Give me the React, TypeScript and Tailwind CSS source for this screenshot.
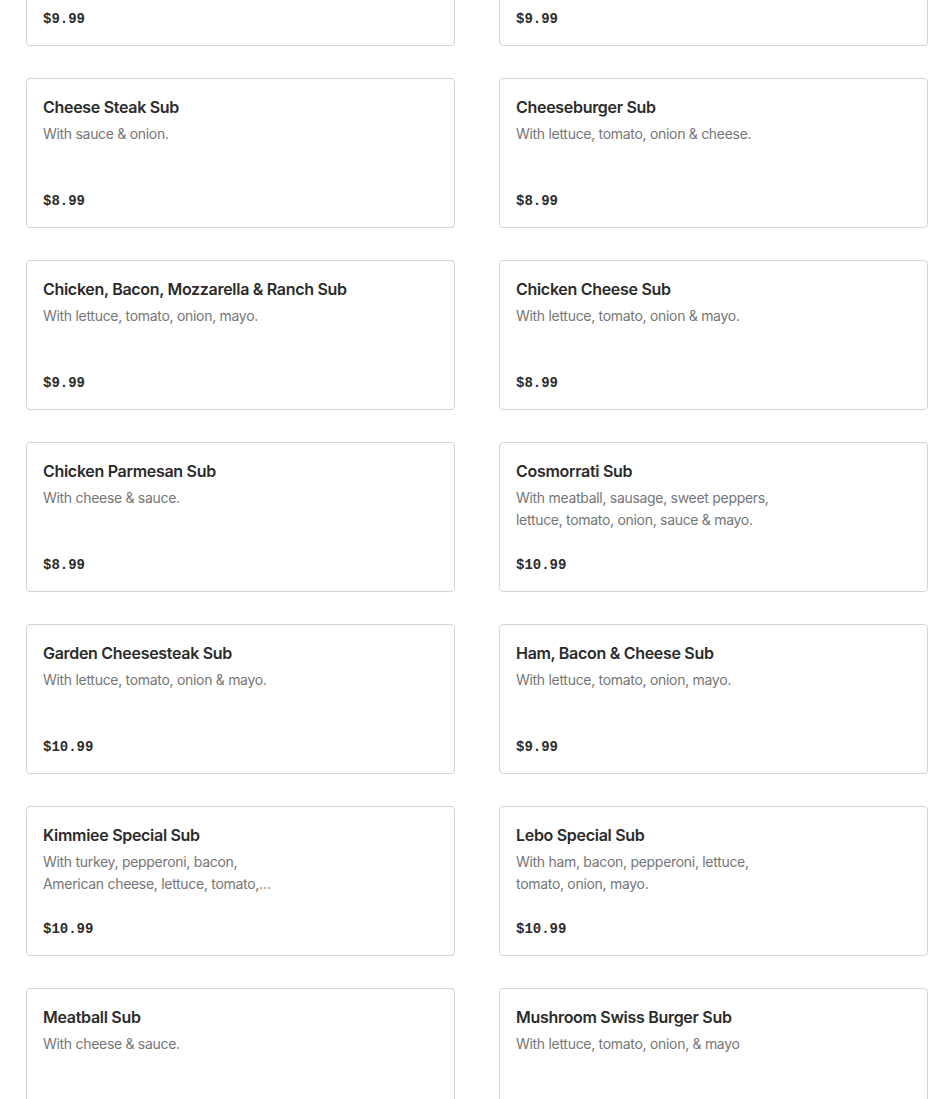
import React from 'react';

type Item = { name: string; desc: string; price: string };

const items: Item[] = [
  { name: 'Bacon Cheeseburger Sub', desc: 'With lettuce, tomato, onion & mayo.', price: '$9.99' },
  { name: 'BLT Sub', desc: 'With bacon, lettuce, tomato & mayo.', price: '$9.99' },
  { name: 'Cheese Steak Sub', desc: 'With sauce & onion.', price: '$8.99' },
  { name: 'Cheeseburger Sub', desc: 'With lettuce, tomato, onion & cheese.', price: '$8.99' },
  { name: 'Chicken, Bacon, Mozzarella & Ranch Sub', desc: 'With lettuce, tomato, onion, mayo.', price: '$9.99' },
  { name: 'Chicken Cheese Sub', desc: 'With lettuce, tomato, onion & mayo.', price: '$8.99' },
  { name: 'Chicken Parmesan Sub', desc: 'With cheese & sauce.', price: '$8.99' },
  { name: 'Cosmorrati Sub', desc: 'With meatball, sausage, sweet peppers, lettuce, tomato, onion, sauce & mayo.', price: '$10.99' },
  { name: 'Garden Cheesesteak Sub', desc: 'With lettuce, tomato, onion & mayo.', price: '$10.99' },
  { name: 'Ham, Bacon & Cheese Sub', desc: 'With lettuce, tomato, onion, mayo.', price: '$9.99' },
  { name: 'Kimmiee Special Sub', desc: 'With turkey, pepperoni, bacon, American cheese, lettuce, tomato, onion, mayo & sweet peppers.', price: '$10.99' },
  { name: 'Lebo Special Sub', desc: 'With ham, bacon, pepperoni, lettuce, tomato, onion, mayo.', price: '$10.99' },
  { name: 'Meatball Sub', desc: 'With cheese & sauce.', price: '$8.99' },
  { name: 'Mushroom Swiss Burger Sub', desc: 'With lettuce, tomato, onion, & mayo', price: '$10.99' },
];

function MenuCard({ item }: { item: Item }) {
  return (
    <div className="h-[150px] rounded-[4px] border border-[#d4d4d4] bg-white px-4 pt-4 pb-4 flex flex-col">
      <h3 className="text-[16px] leading-6 font-semibold text-[#2b2b2b] tracking-[-0.3px]">{item.name}</h3>
      <p className="mt-1 max-w-[255px] text-[14px] leading-[22px] text-[#767676] tracking-[-0.3px] line-clamp-2">{item.desc}</p>
      <div className="mt-auto font-['Liberation_Mono',monospace] text-[14px] leading-5 font-bold text-[#2b2b2b]">{item.price}</div>
    </div>
  );
}

export default function App() {
  return (
    <div className="min-h-screen bg-white font-['Inter',sans-serif] overflow-hidden">
      <div className="mt-[-104px] ml-[26px] mr-[22px] grid grid-cols-2 gap-x-[44px] gap-y-8">
        {items.map((item) => (
          <MenuCard key={item.name} item={item} />
        ))}
      </div>
    </div>
  );
}
